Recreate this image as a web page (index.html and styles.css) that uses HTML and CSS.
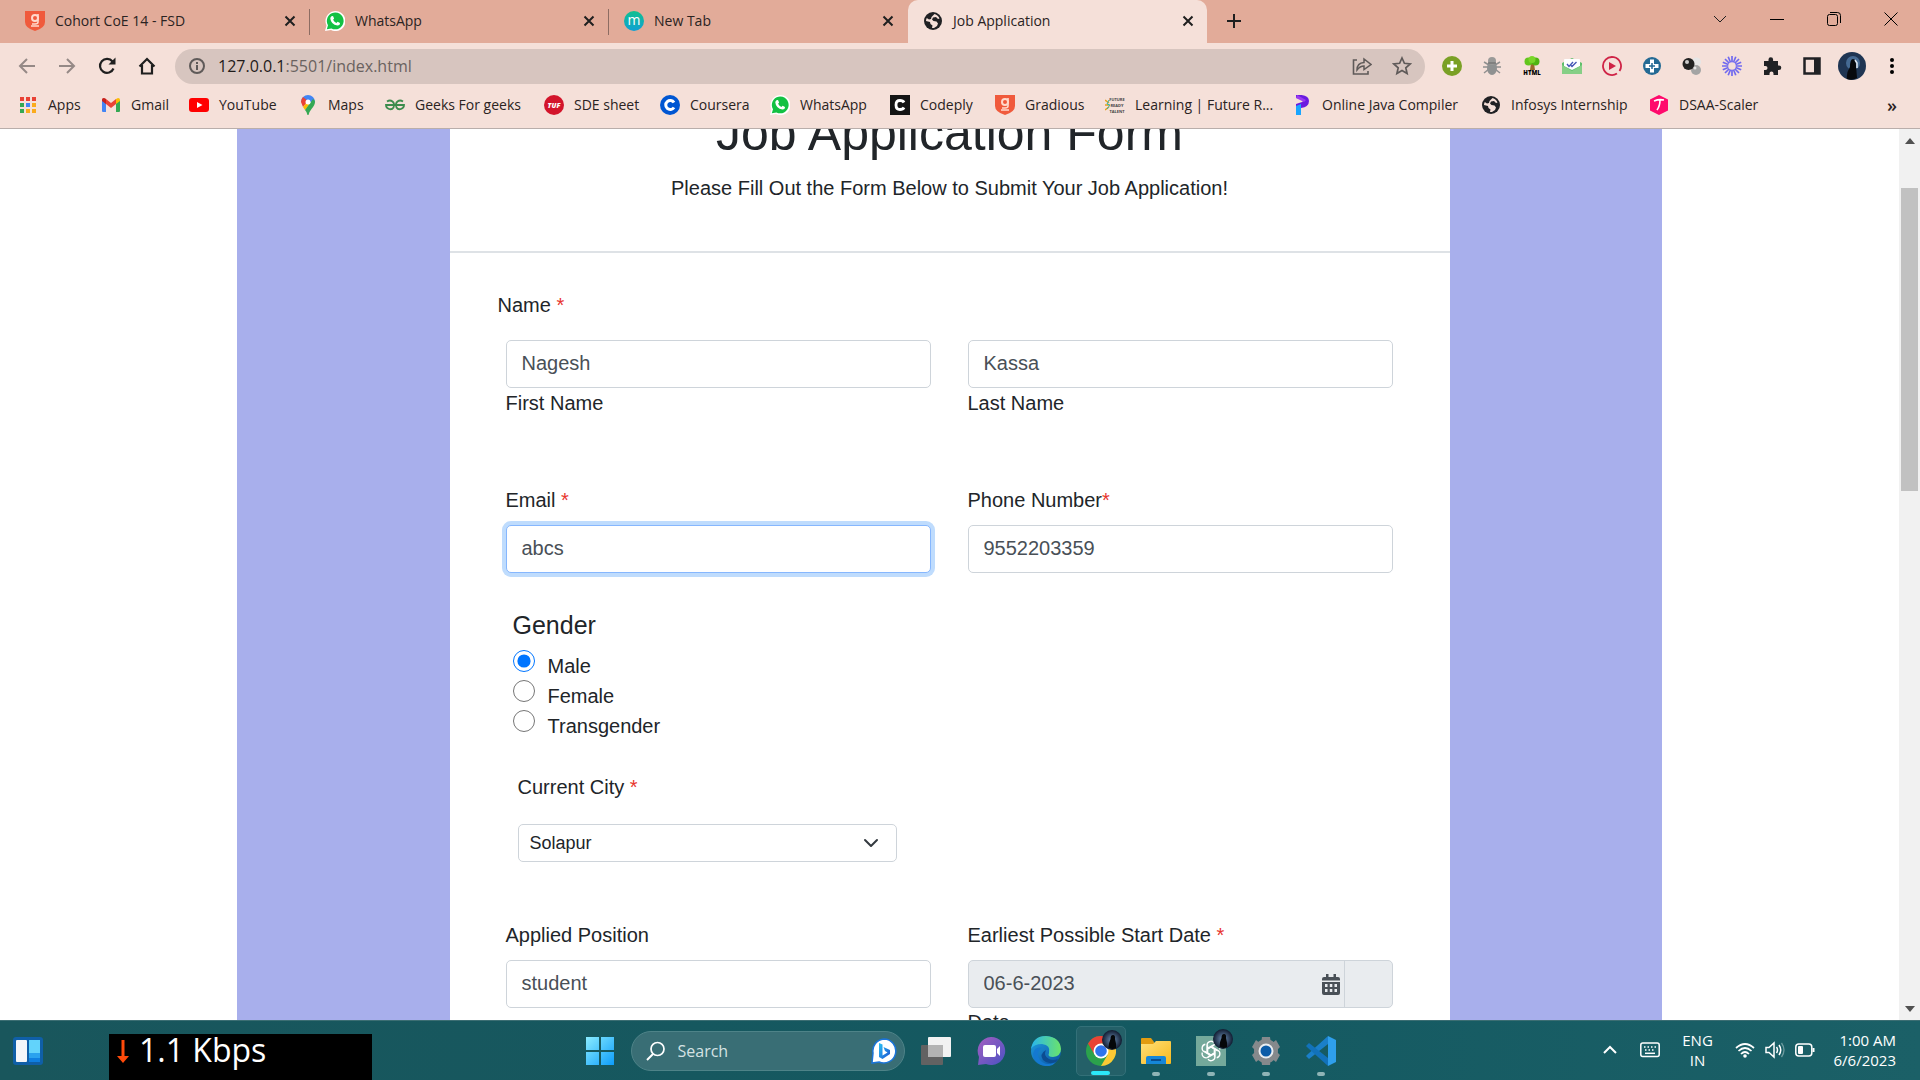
FILE: index.html
```html
<!DOCTYPE html>
<html lang="en">
<head>
<meta charset="utf-8">
<title>Job Application</title>
<link rel="stylesheet" href="styles.css">
</head>
<body>
<svg class="defs" aria-hidden="true">
  <defs>
    <linearGradient id="win" x1="0" y1="0" x2="1" y2="1"><stop offset="0" stop-color="#8aecff"/><stop offset="1" stop-color="#0d9dfb"/></linearGradient>
    <linearGradient id="chat" x1="0" y1="0" x2="1" y2="1"><stop offset="0" stop-color="#a45fc0"/><stop offset="1" stop-color="#4a52c4"/></linearGradient>
    <linearGradient id="edgeBlue" x1="0" y1="0" x2="1" y2="1"><stop offset="0" stop-color="#1fa0e0"/><stop offset="1" stop-color="#0b4fa0"/></linearGradient>
    <linearGradient id="edgeGreen" x1="0" y1="0" x2="1" y2="0"><stop offset="0" stop-color="#28b5ee"/><stop offset="1" stop-color="#6be36a"/></linearGradient>
    <linearGradient id="folder" x1="0" y1="0" x2="1" y2="1"><stop offset="0" stop-color="#ffe07a"/><stop offset="1" stop-color="#f7b91c"/></linearGradient>
    <linearGradient id="bing" x1="0" y1="0" x2="1" y2="1"><stop offset="0" stop-color="#2bc4f5"/><stop offset="1" stop-color="#1a4fd0"/></linearGradient>
    <radialGradient id="night"><stop offset="0" stop-color="#6a8db4"/><stop offset="1" stop-color="#101b30"/></radialGradient>
    <symbol id="gradious" viewBox="0 0 20 20"><path d="M0 0h20v11q0 6-10 9Q0 17 0 11z" fill="#f05a3c"/><circle cx="10" cy="7" r="3" fill="none" stroke="#ffd9cc" stroke-width="2"/><path d="M13 3v8q0 2-3 2H7M6 15h8" fill="none" stroke="#ffd9cc" stroke-width="1.6"/></symbol>
    <symbol id="whatsapp" viewBox="0 0 20 20"><path d="M0 20l1.500-5.500A10 10 0 1 1 6 19z" fill="#fff"/><path d="M1.800 18.200l1.200-4A8.400 8.400 0 1 1 6.400 17.400z" fill="#12c143"/><path d="M6.500 5.200l1.500-.2 1.100 2.600-1 1.200q1.200 2.300 3.300 3.200l1.200-1.200 2.400 1.200q0 2.500-2.600 2.500Q6 13.500 5.300 7.500q0-1.600 1.200-2.300z" fill="#fff"/></symbol>
    <symbol id="globe" viewBox="0 0 20 20"><circle cx="10" cy="10" r="9" fill="#202124"/><path d="M11.500 3q3.800 1 5 4.500l-1.500.5-2-2-3 .5-1 2 1.500 1.500 3 .5 1.500 2-1 2.500-3 2-2 0 .5-2.500-2-1.500-.5-2L3 10q0-1.500.8-3l2.200 1.500 2-.5.5-2z" fill="#f5e0d9"/></symbol>
    <symbol id="x" viewBox="0 0 14 14"><path d="M2.500 2.500l9 9M11.500 2.500l-9 9" stroke="#1f1f1f" stroke-width="2" fill="none"/></symbol>
    <symbol id="buddy" viewBox="0 0 20 20"><circle cx="10" cy="10" r="10" fill="url(#night)"/><path d="M6.500 17.500q.5-5.500 2-8.500 0-4 2.500-4t2 4q1.500 5 1 9-4 2-7.500-.5z" fill="#050709"/></symbol>
  </defs>
</svg>

<div class="window">
  <header class="chrome">
    <nav class="tabs" aria-label="Tabs">
      <div class="tab"><svg class="i20"><use href="#gradious"/></svg><span class="tab-name">Cohort CoE 14 - FSD</span><button class="plain" aria-label="Close tab"><svg class="i14"><use href="#x"/></svg></button></div>
      <div class="tab"><svg class="i20"><use href="#whatsapp"/></svg><span class="tab-name">WhatsApp</span><button class="plain" aria-label="Close tab"><svg class="i14"><use href="#x"/></svg></button></div>
      <div class="tab tab-last"><span class="mint">m</span><span class="tab-name">New Tab</span><button class="plain" aria-label="Close tab"><svg class="i14"><use href="#x"/></svg></button></div>
      <div class="tab tab-active"><svg class="i20"><use href="#globe"/></svg><span class="tab-name">Job Application</span><button class="plain" aria-label="Close tab"><svg class="i14"><use href="#x"/></svg></button></div>
      <button class="plain new-tab" aria-label="New tab"><svg class="i16" viewBox="0 0 16 16"><path d="M8 1v14M1 8h14" stroke="#1f1f1f" stroke-width="2"/></svg></button>
      <div class="win-controls">
        <button class="plain" aria-label="Search tabs"><svg class="i14" viewBox="0 0 14 14"><path d="M1 4l6 6 6-6" fill="none" stroke="#1f1f1f"/></svg></button>
        <button class="plain" aria-label="Minimize"><svg class="i14" viewBox="0 0 14 14"><path d="M0 7.500h14" stroke="#000"/></svg></button>
        <button class="plain" aria-label="Restore"><svg class="i14" viewBox="0 0 14 14"><rect x=".5" y="2.500" width="10" height="11" rx="2" fill="none" stroke="#000"/><path d="M3 .5h7.500q3 0 3 3V11" fill="none" stroke="#000"/></svg></button>
        <button class="plain" aria-label="Close"><svg class="i14" viewBox="0 0 14 14"><path d="M.5.5l13 13M13.500.5l-13 13" stroke="#000"/></svg></button>
      </div>
    </nav>

    <div class="toolbar">
      <button class="plain" aria-label="Back"><svg class="i20" viewBox="0 0 20 20"><path d="M18 10H3M10 3l-7 7 7 7" fill="none" stroke="#958986" stroke-width="2"/></svg></button>
      <button class="plain" aria-label="Forward"><svg class="i20" viewBox="0 0 20 20"><path d="M2 10h15M10 3l7 7-7 7" fill="none" stroke="#958986" stroke-width="2"/></svg></button>
      <button class="plain" aria-label="Reload"><svg class="i20" viewBox="0 0 20 20"><path d="M16.500 12.500A7 7 0 1 1 15.500 5.500" fill="none" stroke="#1f1f1f" stroke-width="2.200"/><path d="M18.500 1.500v7h-7z" fill="#1f1f1f"/></svg></button>
      <button class="plain" aria-label="Home"><svg class="i20" viewBox="0 0 20 20"><path d="M5 9v8.500h10V9M2.500 10.500L10 3l7.500 7.500" fill="none" stroke="#1f1f1f" stroke-width="2.200"/></svg></button>
      <div class="address">
        <svg class="i18" viewBox="0 0 18 18"><circle cx="9" cy="9" r="7" fill="none" stroke="#5f5a59" stroke-width="2"/><path d="M9 8v5M9 5v2" stroke="#5f5a59" stroke-width="2"/></svg>
        <span class="url"><b>127.0.0.1</b>:5501/index.html</span>
        <button class="plain" aria-label="Share"><svg class="i20" viewBox="0 0 20 20"><path d="M5 4H1.500v14H16v-3" fill="none" stroke="#5f5a59" stroke-width="1.600"/><path d="M5 14q0-7 7-7.500V3l7 5.500-7 5V10q-4 0-7 4z" fill="none" stroke="#5f5a59" stroke-width="1.500"/></svg></button>
        <button class="plain" aria-label="Bookmark"><svg class="i20" viewBox="0 0 20 20"><path d="M10 2l2.400 5.300 5.800.6-4.400 3.900 1.300 5.700L10 14.600l-5.100 2.900 1.300-5.700L1.800 7.900l5.800-.6z" fill="none" stroke="#5f5a59" stroke-width="1.700"/></svg></button>
      </div>
      <div class="extensions">
        <svg class="i20" viewBox="0 0 20 20"><circle cx="10" cy="10" r="10" fill="#7aa025"/><path d="M10 5v10M5 10h10" stroke="#fff" stroke-width="3"/></svg>
        <svg class="i20" viewBox="0 0 20 20"><path d="M2 6l5 3M1 11h18M2 17l5-4M18 6l-5 3M18 17l-5-4" stroke="#8f8f8f" stroke-width="1.500"/><ellipse cx="10" cy="12" rx="5" ry="7" fill="#8f9191"/><circle cx="10" cy="5" r="4" fill="#9a9a98"/><path d="M6 7h8" stroke="#666"/></svg>
        <svg class="i20" viewBox="0 0 20 20"><path d="M9 7h3l1 7H8z" fill="#9b6a2c"/><circle cx="6.500" cy="5.500" r="4" fill="#63c51d"/><circle cx="13.500" cy="5.500" r="4" fill="#4fb512"/><circle cx="10" cy="3.500" r="3.500" fill="#7ad62a"/><text x="10" y="19" class="tiny-html">HTML</text></svg>
        <svg class="i20" viewBox="0 0 20 20"><path d="M0 7l10-5 10 5v10q0 1-1 1H1q-1 0-1-1z" fill="#5fbf6c"/><path d="M2 4q0-1 1-1h14q1 0 1 1v6l-8 4-8-4z" fill="#fff"/><path d="M0 9l10 6 10-6v8q0 1-1 1H1q-1 0-1-1z" fill="#86cf86"/><path d="M5 8l2 2.500L11 6M9 9.500l1 1L14.500 6" fill="none" stroke="#4556b5" stroke-width="1.400"/></svg>
        <svg class="i20" viewBox="0 0 20 20"><path d="M15 17.500A9 9 0 1 1 17.500 15" fill="none" stroke="#cf2346" stroke-width="1.800"/><path d="M7 6l7 4-7 4z" fill="#cf2346"/></svg>
        <svg class="i20" viewBox="0 0 20 20"><circle cx="10" cy="10" r="9" fill="#246a94"/><path d="M8 3.500h4V8h4.500v4H12v4.500H8V12H3.500V8H8z" fill="#fff"/><path d="M10 7v6M7 10h6" stroke="#246a94" stroke-width="1.500"/></svg>
        <svg class="i20" viewBox="0 0 20 20"><circle cx="14.500" cy="6" r="4.500" fill="#e6e6e6"/><circle cx="14" cy="14" r="5" fill="#a4a4a4"/><circle cx="6.500" cy="8" r="6" fill="#222"/><circle cx="5" cy="6" r="2" fill="#ccc"/><circle cx="13" cy="12" r="1.500" fill="#e4e4e4"/></svg>
        <svg class="i20" viewBox="0 0 20 20"><path d="M10 0v20M0 10h20M3 3l14 14M17 3L3 17M6.200.8l7.600 18.400M.8 13.800l18.400-7.600M.8 6.200l18.400 7.600M13.800.8L6.200 19.200" stroke="#7069ef" stroke-width="1.700"/><circle cx="10" cy="10" r="3.800" fill="#f5e0d9"/></svg>
        <svg class="i20" viewBox="0 0 20 20"><path d="M2 5h4.500V3.500a2.300 2.300 0 0 1 4.600 0V5H16v4.500h1a2.300 2.300 0 0 1 0 4.600h-1V19h-4.500v-1.500a2 2 0 0 0-4 0V19H2v-5h1.500a2 2 0 0 0 0-4H2z" fill="#202124"/></svg>
        <svg class="i20" viewBox="0 0 20 20"><rect x="2.500" y="2.500" width="15" height="15" fill="none" stroke="#202124" stroke-width="2.500"/><path d="M12 2h6v16h-6z" fill="#202124"/></svg>
        <svg class="i28" viewBox="0 0 28 28"><circle cx="14" cy="14" r="14" fill="#1f3553"/><circle cx="15" cy="11" r="7" fill="#456a93"/><path d="M9 27q-1-6 3-12 0-8 3-8t3 6l1 13q-5 3-10 1z" fill="#07090d"/><path d="M17 8l2 3v5" stroke="#dfe9f2" stroke-width="1.500" fill="none"/></svg>
        <button class="plain" aria-label="Menu"><svg class="i20" viewBox="0 0 20 20"><circle cx="10" cy="4" r="2"/><circle cx="10" cy="10" r="2"/><circle cx="10" cy="16" r="2"/></svg></button>
      </div>
    </div>

    <nav class="bookmarks" aria-label="Bookmarks">
      <a href="#"><svg class="i20" viewBox="0 0 20 20"><path d="M2 2h4v4H2zM8 2h4v4H8zM14 2h4v4h-4z" fill="#e94235"/><path d="M2 8h4v4H2z" fill="#34a853"/><path d="M8 8h4v4H8z" fill="#4285f4"/><path d="M14 8h4v4h-4zM8 14h4v4H8zM14 14h4v4h-4z" fill="#fbab1c"/><path d="M2 14h4v4H2z" fill="#34a853"/></svg>Apps</a>
      <a href="#"><svg class="i20" viewBox="0 0 20 20"><path d="M1 5v11q0 1 1 1h3V8z" fill="#4285f4"/><path d="M19 5v11q0 1-1 1h-3V8z" fill="#34a853"/><path d="M1 5q0-3 4-1l5 4 5-4v5l-5 4-5-4z" fill="#ea4335"/><path d="M1 5q0-2 2-2l2 1v5L1 6z" fill="#c5221f"/><path d="M19 5q0-2-2-2l-2 1v5l4-3z" fill="#fbbc04"/></svg>Gmail</a>
      <a href="#"><svg class="i20" viewBox="0 0 20 20"><rect y="3" width="20" height="14" rx="3" fill="#f00"/><path d="M8 7l5.500 3L8 13z" fill="#fff"/></svg>YouTube</a>
      <a href="#"><svg class="i20" viewBox="0 0 20 20"><path d="M10 0a7 7 0 0 0-7 7h14a7 7 0 0 0-7-7z" fill="#4285f4"/><path d="M5 2Q3 4 3 7l2 5 5-6z" fill="#ea4335"/><path d="M5 12l5-6 1 4-4 5z" fill="#fbbc04"/><path d="M17 7q0 3-3.500 7-2.500 3-3 6h-1q-.5-3-2.500-5l8-11q2 1 2 3z" fill="#34a853"/><circle cx="10" cy="7" r="2.500" fill="#fff"/></svg>Maps</a>
      <a href="#"><svg class="i20" viewBox="0 0 20 20"><path d="M2 6.500q3-2 5.500 0t1 6Q7 15 4 14t-3-4h18q0 3-3 4t-4.500-1.500q-1.500-4 1-6t5.500 0" fill="none" stroke="#3c8c4d" stroke-width="1.800"/></svg>Geeks For geeks</a>
      <a href="#"><svg class="i20" viewBox="0 0 20 20"><circle cx="10" cy="10" r="10" fill="#d3142b"/><text x="10" y="13" class="tiny-tuf">TUF</text></svg>SDE sheet</a>
      <a href="#"><svg class="i20" viewBox="0 0 20 20"><circle cx="10" cy="10" r="10" fill="#0056d2"/><path d="M14 12.500a4.500 4.500 0 1 1 0-5" fill="none" stroke="#fff" stroke-width="3"/></svg>Coursera</a>
      <a href="#"><svg class="i20"><use href="#whatsapp"/></svg>WhatsApp</a>
      <a href="#"><svg class="i20" viewBox="0 0 20 20"><path d="M0 0h20v20H0z" fill="#141414"/><path d="M14 7.500q-1-2-4-2-4 0-4 4.500t4 4.500q3 0 4-2" fill="none" stroke="#fff" stroke-width="2.800"/></svg>Codeply</a>
      <a href="#"><svg class="i20"><use href="#gradious"/></svg>Gradious</a>
      <a href="#"><svg class="i20" viewBox="0 0 20 20"><path d="M0 5l4 3M0 10h4M0 15l4-3" stroke="#e8a11c" stroke-width="1.500"/><path d="M4 5l-2 4 3 1-3 4" stroke="#36b3a0" fill="none"/><text x="12" y="6" class="tiny-fut">FUTURE</text><text x="12" y="12" class="tiny-fut">READY</text><text x="12" y="18" class="tiny-fut">TALENT</text></svg>Learning | Future R...</a>
      <a href="#"><svg class="i20" viewBox="0 0 20 20"><path d="M4 0q13-1 13 6 0 6-8 7H4V9l6-2q2-1 0-3L4 3z" fill="#6a1be0"/><path d="M5 0l9 5-2 2-8-4z" fill="#9a3bf0"/><path d="M4 11l5-2v11H4z" fill="#18a5ff"/></svg>Online Java Compiler</a>
      <a href="#"><svg class="i20"><use href="#globe"/></svg>Infosys Internship</a>
      <a href="#"><svg class="i20" viewBox="0 0 20 20"><path d="M10 0l9 4.500v11L10 20l-9-4.500v-11z" fill="#ff0a6c"/><path d="M5 6q5-2 10-1M11 5q0 6-3 10" fill="none" stroke="#fff" stroke-width="1.600"/></svg>DSAA-Scaler</a>
      <button class="plain more" aria-label="More bookmarks">»</button>
    </nav>
  </header>

  <div class="viewport">
    <main class="page">
      <div class="backdrop">
        <form class="card">
          <div class="intro">
            <h1>Job Application Form</h1>
            <p>Please Fill Out the Form Below to Submit Your Job Application!</p>
          </div>
          <div class="form-body">
            <div class="name-title">Name <i>*</i></div>
            <div class="pair">
              <div class="field"><input class="box" id="first" value="Nagesh"><label for="first">First Name</label></div>
              <div class="field"><input class="box" id="last" value="Kassa"><label for="last">Last Name</label></div>
            </div>
            <div class="pair contact">
              <div class="field spaced"><label for="email">Email <i>*</i></label><input class="box focused" id="email" value="abcs"></div>
              <div class="field spaced"><label for="phone">Phone Number<i>*</i></label><input class="box" id="phone" value="9552203359"></div>
            </div>
            <fieldset class="gender">
              <legend>Gender</legend>
              <div class="option"><input type="radio" name="gender" id="male" checked><label for="male">Male</label></div>
              <div class="option"><input type="radio" name="gender" id="female"><label for="female">Female</label></div>
              <div class="option"><input type="radio" name="gender" id="trans"><label for="trans">Transgender</label></div>
            </fieldset>
            <div class="city">
              <label for="city">Current City <i>*</i></label>
              <select id="city"><option>Solapur</option></select>
            </div>
            <div class="pair">
              <div class="field spaced"><label for="position">Applied Position</label><input class="box" id="position" value="student"></div>
              <div class="field spaced">
                <label for="start">Earliest Possible Start Date <i>*</i></label>
                <div class="date-group">
                  <input id="start" value="06-6-2023">
                  <svg class="calendar" viewBox="0 0 18 21"><path d="M4 0h2.500v3h5V0H14v3h2q2 0 2 2v1.500H0V5q0-2 2-2h2zM0 8h18v11q0 2-2 2H2q-2 0-2-2z" fill="#495057"/><path d="M3 10h2.500v3H3zM7.800 10h2.500v3H7.800zM12.500 10H15v3h-2.500zM3 15h2.500v3H3zM7.800 15h2.500v3H7.800zM12.500 15H15v3h-2.500z" fill="#e9ecef"/></svg>
                  <span class="addon"></span>
                </div>
                <span class="hint">Date</span>
              </div>
            </div>
          </div>
        </form>
      </div>
    </main>
    <div class="scrollbar">
      <svg viewBox="0 0 10 6"><path d="M0 6l5-6 5 6z" fill="#505050"/></svg>
      <div class="track"><div class="thumb"></div></div>
      <svg viewBox="0 0 10 6"><path d="M0 0l5 6 5-6z" fill="#505050"/></svg>
    </div>
  </div>

  <footer class="taskbar">
    <div class="left">
      <svg class="widgets" viewBox="0 0 30 28"><rect width="30" height="28" rx="3" fill="#0f5fa8"/><rect x="3" y="3" width="11" height="22" rx="1" fill="#f4f6f9"/><rect x="16" y="3" width="11" height="13" fill="#62d3fb"/><rect x="16" y="16" width="11" height="5" fill="#2aa2ee"/><rect x="16" y="21" width="11" height="4" fill="#0f7fe0"/></svg>
      <div class="speed"><svg viewBox="0 0 12 24"><path d="M6 0v18" stroke="#ff4a0a" stroke-width="3"/><path d="M0 16h12l-6 7z" fill="#ff4a0a"/></svg>1.1 Kbps</div>
    </div>
    <div class="apps">
      <button class="plain app" aria-label="Start"><svg class="i30" viewBox="0 0 30 30"><path d="M1 1h13v13H1zM16 1h13v13H16zM1 16h13v13H1zM16 16h13v13H16z" fill="url(#win)"/></svg></button>
      <div class="search">
        <svg class="i20" viewBox="0 0 20 20"><circle cx="11.500" cy="8" r="6.500" fill="none" stroke="#fff" stroke-width="1.700"/><path d="M7 13l-6 6" stroke="#fff" stroke-width="2"/></svg>
        <input aria-label="Search" placeholder="Search">
        <svg class="i26" viewBox="0 0 26 26"><path d="M13 1a12 12 0 1 1-5 23l-7 1 1-10A12 12 0 0 1 13 1z" fill="#fff" stroke="#1b74d8" stroke-width="1.500"/><path d="M8 5l3.500 1.500v11l5-3-2.500-1.500-1.500-4 6.500 3v4L11.500 21 8 19z" fill="url(#bing)"/></svg>
      </div>
      <button class="plain app" aria-label="Task view"><svg class="i30" viewBox="0 0 30 30"><rect y="9" width="22" height="20" rx="1" fill="#626262"/><rect x="7" y="1" width="23" height="20" rx="1" fill="#f2f2f2"/><rect x="7" y="9" width="15" height="12" fill="#b3b3b3"/></svg></button>
      <button class="plain app" aria-label="Chat"><svg class="i30" viewBox="0 0 30 30"><path d="M15 1a14 14 0 1 1-5 27l-8 1 1-8A14 14 0 0 1 15 1z" fill="url(#chat)"/><rect x="7" y="9" width="13" height="12" rx="2" fill="#fff"/><path d="M21 13l3-3v10l-3-3z" fill="#fff"/></svg></button>
      <button class="plain app" aria-label="Edge"><svg class="i30" viewBox="0 0 30 30"><circle cx="15" cy="15" r="15" fill="url(#edgeBlue)"/><path d="M0 13Q2 0 15 0q14 1 15 13 0 7-8 8-6 0-4-4 2-8-7-9Q3 8 0 13z" fill="url(#edgeGreen)"/><path d="M11 12q-7 5-2 12 6 7 16 2-4 5-11 4Q3 28 2 18q2-8 9-6z" fill="#1479d0"/><path d="M15 14q-3 6 3 9 4 2 9 0l-2 3q-8 3-13-2-4-6 3-10z" fill="#0c4d91"/></svg></button>
      <button class="plain app running current" aria-label="Chrome"><svg class="i30" viewBox="0 0 30 30"><circle cx="15" cy="15" r="15" fill="#2ba24c"/><path d="M2 7.500A15 15 0 0 1 28 7.500H15l-6.500 11z" fill="#ea4335"/><path d="M15 7.500h13A15 15 0 0 1 15 30l6.500-11z" fill="#fcc934"/><circle cx="15" cy="15" r="7.500" fill="#fff"/><circle cx="15" cy="15" r="5.800" fill="#2f74ec"/></svg><svg class="badge"><use href="#buddy"/></svg></button>
      <button class="plain app running" aria-label="File Explorer"><svg class="i30" viewBox="0 0 30 30"><path d="M0 3q0-1 1-1h9l3 4v6H0z" fill="#e29c10"/><path d="M0 8h12l3-3h14q1 0 1 1v21q0 1-1 1H1q-1 0-1-1z" fill="url(#folder)"/><path d="M5 28v-6q0-2 2-2h16q2 0 2 2v6z" fill="#1587d8"/><path d="M10 24h10" stroke="#0a4e8f" stroke-width="2"/></svg></button>
      <button class="plain app running" aria-label="ChatGPT"><svg class="i30" viewBox="0 0 30 30"><path d="M0 0h30v30H0z" fill="#75a99b"/><g fill="none" stroke="#fff" stroke-width="1.300"><path id="petal" d="M11 17.300V9.500a4 4 0 0 1 7-2.800M11.500 13l3.500-2 6.700 3.900"/><use href="#petal" transform="rotate(60 15 15)"/><use href="#petal" transform="rotate(120 15 15)"/><use href="#petal" transform="rotate(180 15 15)"/><use href="#petal" transform="rotate(240 15 15)"/><use href="#petal" transform="rotate(300 15 15)"/></g></svg><svg class="badge"><use href="#buddy"/></svg></button>
      <button class="plain app running" aria-label="Settings"><svg class="i30" viewBox="0 0 30 30"><circle cx="15" cy="15" r="12" fill="#85898c"/><path d="M11 1h8l1 7H10zM11 29h8l1-7H10zM1 11l4-7 6 5-5 7zM29 11l-4-7-6 5 5 7zM1 19l4 7 6-5-5-7zM29 19l-4 7-6-5 5-7z" fill="#85898c"/><circle cx="15" cy="15" r="7.500" fill="#e9edf0"/><circle cx="15" cy="15" r="5.500" fill="#0c5ca8"/></svg></button>
      <button class="plain app running" aria-label="VS Code"><svg class="i30" viewBox="0 0 30 30"><path d="M22 0L2 18l-2 2 3 3L22 8z" fill="#1a7fc9"/><path d="M22 30L2 12l-2-2 3-3 19 15z" fill="#1272ba"/><path d="M22 0l8 4v22l-8 4z" fill="#2f9fec"/></svg></button>
    </div>
    <div class="tray">
      <svg class="i14" viewBox="0 0 14 14"><path d="M1 10l6-6 6 6" fill="none" stroke="#fff" stroke-width="2"/></svg>
      <svg class="i20 keys" viewBox="0 0 20 20"><rect x=".8" y="3" width="18.400" height="13.500" rx="2" fill="none" stroke="#fff" stroke-width="1.500"/><path d="M4 7h12.500M5 10h10" stroke="#fff" stroke-width="1.600" stroke-dasharray="1.500 2"/><path d="M5 13.300h10" stroke="#fff" stroke-width="1.500"/></svg>
      <div class="lang">ENG<br>IN</div>
      <div class="status">
        <svg class="i20" viewBox="0 0 20 20"><path d="M1 8q9-8 18 0M3.500 11q6.500-6 13 0M6 14q4-4 8 0" fill="none" stroke="#fff" stroke-width="1.700"/><circle cx="10" cy="16" r="1.800" fill="#fff"/></svg>
        <svg class="i20" viewBox="0 0 20 20"><path d="M1 7.500h3L9 3v14l-5-4.500H1z" fill="none" stroke="#fff" stroke-width="1.500"/><path d="M11.500 7q2 3 0 6M14 5q3.500 5 0 10" fill="none" stroke="#fff" stroke-width="1.500"/><path d="M16.500 3q5 7 0 14" fill="none" stroke="#6d9a9e" stroke-width="1.300"/></svg>
        <svg class="i20" viewBox="0 0 20 20"><rect x=".8" y="4" width="16" height="12" rx="3" fill="none" stroke="#fff" stroke-width="1.500"/><rect x="3" y="6" width="5" height="8" rx="1" fill="#fff"/><path d="M18.500 8v4" stroke="#fff" stroke-width="2"/></svg>
      </div>
      <div class="clock">1:00 AM<br>6/6/2023</div>
    </div>
  </footer>
</div>
</body>
</html>
```
FILE: styles.css
```css
* { box-sizing: border-box; }
body { margin: 0; font-family: "Open Sans", "Noto Sans", sans-serif; }
.defs { position: absolute; width: 0; height: 0; }
svg { flex: none; display: block; }
.i14 { width: 14px; height: 14px; }
.i16 { width: 16px; height: 16px; }
.i18 { width: 18px; height: 18px; }
.i20 { width: 20px; height: 20px; }
.i26 { width: 26px; height: 26px; }
.i28 { width: 28px; height: 28px; }
.i30 { width: 30px; height: 30px; }
.plain { border: 0; padding: 0; background: none; font: inherit; color: inherit; display: flex; align-items: center; justify-content: center; }

.window { height: 100vh; display: flex; flex-direction: column; overflow: hidden; }

/* Browser chrome */
.chrome { flex: none; background: #f5e0d9; border-bottom: 1px solid #b9aeab; color: #2a2322; font-size: 14px; }
.tabs { display: flex; align-items: center; height: 43px; padding-left: 10px; background: #e2ab99; }
.tab { display: flex; align-items: center; gap: 10px; flex: 0 1 300px; height: 26px; padding: 0 12px 2px 15px; border-right: 1px solid #8d6c62; }
.tab + .tab { flex-basis: 299px; }
.tab-last { border-right-color: transparent; }
.tab-active { height: 43px; border: 0; border-radius: 10px 10px 0 0; background: #f5e0d9; }
.tab-name { flex: 1; white-space: nowrap; }
.mint { width: 20px; height: 20px; border-radius: 50%; background: linear-gradient(#0fc08f, #0fa0d4); color: #fff; font-size: 14px; line-height: 18px; text-align: center; }
.new-tab { width: 54px; padding-bottom: 1px; }
.win-controls { display: flex; gap: 43px; margin-left: auto; padding: 0 22px 5px 0; }

.toolbar { display: flex; align-items: center; gap: 20px; height: 41px; padding: 5px 18px 0 17px; }
.address { display: flex; align-items: center; gap: 20px; flex: 1; height: 35px; margin-left: -2px; padding: 0 13px; border-radius: 18px; background: #d7c5bf; }
.url { flex: 1; margin-left: -8px; font-size: 16px; line-height: 24px; color: #6a6260; }
.url b { font-weight: 400; color: #1f1b1a; }
.extensions { display: flex; align-items: center; gap: 20px; margin-left: -3px; }
.extensions .i28 { margin: 0 -4px; }
.tiny-html { font: 900 6px "Open Sans", sans-serif; text-anchor: middle; }
.tiny-tuf { font: italic 800 7px "Open Sans", sans-serif; text-anchor: middle; fill: #fff; }
.tiny-fut { font: 700 4px "Open Sans", sans-serif; text-anchor: middle; fill: #444; }

.bookmarks { display: grid; grid-template-columns: 83px 88px 109px 87px 159px 116px 110px 120px 105px 110px 187px 189px 168px 200px 1fr; align-items: center; height: 44px; padding: 0 18px 2px; }
.bookmarks a { display: flex; align-items: center; gap: 10px; color: inherit; text-decoration: none; white-space: nowrap; line-height: 20px; }
.more { justify-content: flex-end; padding-right: 5px; font-size: 18px; line-height: 20px; font-weight: 600; }

/* Web page */
.viewport { flex: 1; min-height: 0; display: flex; background: #fff; font-family: "Liberation Sans", Arial, sans-serif; font-size: 20px; line-height: 30px; color: #212529; }
.page { flex: 1; overflow: hidden; }
.backdrop { width: 75%; min-height: 100%; margin: 0 auto; background: #a8afec; }
.card { width: 100%; max-width: 1000px; margin: 0 auto; padding-bottom: 60px; background: #fff; display: flow-root; }
.card i { color: #e8352e; font-style: normal; }
.intro { margin-top: -21px; padding-bottom: 48px; border-bottom: 2px solid #dee2e6; text-align: center; }
.intro h1 { margin: 0 0 15px; font-size: 50px; line-height: 50px; font-weight: 400; }
.intro p { margin: 0; }
.form-body { padding: 37px 57px 0 56px; }
.name-title { margin: 0 0 20px -8px; }
.pair { display: grid; grid-template-columns: 1fr 1fr; gap: 37px; }
.field { display: flex; flex-direction: column; }
.spaced { gap: 10px; }
.box { width: 100%; height: 48px; padding: 0 15px 2px; border: 1px solid #ced4da; border-radius: 5px; background: #fff; font: inherit; color: #495057; }
.focused { border-color: #86b7fe; box-shadow: 0 0 0 4px #bfdcfd; }
.contact { margin-top: 67px; }
.gender { margin: 37px 0 0 7px; padding: 0; border: 0; }
.gender legend { padding: 0; margin-bottom: 10px; font-size: 25px; }
.option { display: flex; gap: 13px; height: 30px; }
.option label { padding-top: 1px; }
.option input { width: 22px; height: 22px; margin: 0; accent-color: #0075ff; }
.city { display: flex; flex-direction: column; gap: 22px; width: 379px; margin: 32px 0 58px 12px; }
.city select { appearance: none; height: 38px; padding: 0 11px; border: 1px solid #ced4da; border-radius: 5px; font: inherit; font-size: 18px; color: #212529; background: #fff url("data:image/svg+xml,%3Csvg xmlns='http://www.w3.org/2000/svg' viewBox='0 0 16 16'%3E%3Cpath fill='none' stroke='%23343a40' stroke-linecap='round' stroke-linejoin='round' stroke-width='2' d='m2 5 6 6 6-6'/%3E%3C/svg%3E") no-repeat right 17px center / 16px 16px; }
.date-group { display: flex; align-items: center; height: 48px; border: 1px solid #ced4da; border-radius: 5px; background: #e9ecef; }
.date-group input { flex: 1; min-width: 0; padding: 0 15px 2px; border: 0; background: none; font: inherit; color: #495057; }
.calendar { width: 18px; height: 21px; margin-right: 4px; }
.addon { align-self: stretch; width: 48px; border-left: 1px solid #ced4da; }
.hint { margin-top: -11px; }

.scrollbar { display: flex; flex-direction: column; align-items: center; width: 21px; padding: 9px 0 8px; background: #f1f1f1; }
.scrollbar svg { width: 10px; height: 6px; }
.track { flex: 1; width: 100%; padding: 44px 2px 0; }
.thumb { height: 37%; background: #c1c1c1; }

/* Taskbar */
.taskbar { flex: none; display: grid; grid-template-columns: 1fr auto 1fr; height: 60px; background: linear-gradient(90deg, #19565c, #145961 60%, #1b6067); border-top: 1px solid #3c6e73; color: #fff; font-size: 15px; line-height: 20px; }
.left { display: flex; align-items: center; gap: 66px; padding-left: 13px; }
.widgets { width: 30px; height: 28px; }
.speed { display: flex; align-self: flex-end; gap: 10px; width: 263px; height: 46px; padding: 2px 0 0 8px; background: #000; font-size: 32px; line-height: 28px; }
.speed svg { width: 12px; height: 24px; margin-top: 4px; }
.apps { display: flex; align-items: center; gap: 5px; }
.app { position: relative; width: 50px; height: 50px; }
.running::after { content: ""; position: absolute; bottom: 0; width: 8px; height: 4px; border-radius: 2px; background: #8fb4b6; }
.current { border: 1px solid #337078; border-radius: 5px; background: #246068; }
.current::after { width: 19px; background: #2be8f8; }
.badge { position: absolute; top: 3px; right: 3px; width: 20px; height: 20px; }
.search { display: flex; align-items: center; gap: 12px; width: 274px; height: 40px; margin: 0 1px; padding: 0 7px 0 14px; border: 1px solid #4e8388; border-radius: 20px; background: #396e75; }
.search input { flex: 1; min-width: 0; padding: 0; border: 0; background: none; font: inherit; font-size: 16px; color: #fff; }
.search input::placeholder { color: #d5e2e3; }
.tray { display: flex; align-items: center; justify-content: flex-end; padding: 0 24px 2px 0; }
.keys { margin: 0 21px 0 23px; }
.lang { width: 34px; text-align: center; }
.status { display: flex; gap: 10px; margin: 0 19px 0 20px; }
.clock { text-align: right; }
```
